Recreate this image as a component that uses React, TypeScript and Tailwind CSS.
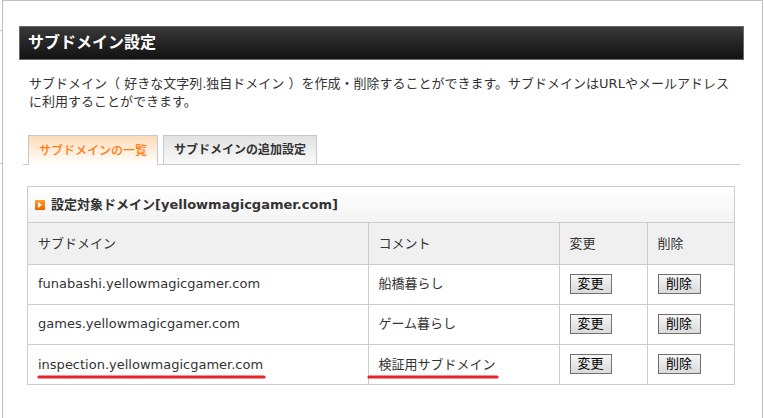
import React from "react";

const font = '"DejaVu Sans", "Noto Sans CJK JP", sans-serif';

function Btn({ label, w }: { label: string; w: string }) {
  return (
    <button className={`${w} h-[20px] border border-[#707070] bg-gradient-to-b from-[#f6f6f6] to-[#dadada] text-[13px] leading-[18px] text-black`}>
      {label}
    </button>
  );
}

function Underlined({ children, w, left }: { children: React.ReactNode; w: number; left: string }) {
  return (
    <span className="relative inline-block">
      {children}
      <svg
        className={`absolute ${left} top-[19px]`}
        width={w}
        height={6}
        viewBox={`0 0 ${w} 6`}
      >
        <path d={`M2 3 L${w - 2} 3`} stroke="#e8202a" strokeWidth={3.2} strokeLinecap="round" />
      </svg>
    </span>
  );
}

export default function App() {
  const rows = [
    { d: "funabashi.yellowmagicgamer.com", c: "船橋暮らし" },
    { d: "games.yellowmagicgamer.com", c: "ゲーム暮らし" },
    { d: "inspection.yellowmagicgamer.com", c: "検証用サブドメイン", mark: true },
  ];
  return (
    <div className="w-[764px] h-[418px] bg-white flex overflow-hidden text-[#333]" style={{ fontFamily: font }}>
      <div className="w-[2px] shrink-0 flex flex-col">
        <div className="h-[31px] border-b border-[#c8c8c8]" />
        <div className="h-[133px] border-b border-[#c8c8c8]" />
      </div>
      <div className="w-[761px] shrink-0 border-l border-t border-r border-[#c0c0c0] h-[430px] pl-[16px] pr-[18px] pt-[25px]">
        <div className="h-[34px] border border-[#6a6a6a] bg-gradient-to-b from-[#3a3a3a] to-[#121212] flex items-center pl-[8px]">
          <span className="text-white font-bold text-[16px] leading-none">サブドメイン設定</span>
        </div>
        <p className="mt-[15px] pl-[10px] text-[13px] leading-[18px] whitespace-nowrap">
          サブドメイン（ 好きな文字列.独自ドメイン ）を作成・削除することができます。サブドメインはURLやメールアドレス
          <br />
          に利用することができます。
        </p>
        <div className="mt-[24px] ml-[4px] w-[717px] border-b border-[#c8c8c8] flex items-end pl-[5px] gap-[5px] h-[30px]">
          <div className="w-[130px] h-[30px] -mb-px border border-b-0 border-[#c8c8c8] bg-gradient-to-b from-[#fddcb8] to-white flex items-center justify-center">
            <span className="text-[12px] font-medium text-[#ff7a10]">サブドメインの一覧</span>
          </div>
          <div className="w-[154px] h-[29px] border border-b-0 border-[#c8c8c8] bg-gradient-to-b from-[#e2e2e2] to-[#fafafa] flex items-center justify-center">
            <span className="text-[12px] font-bold text-[#333]">サブドメインの追加設定</span>
          </div>
        </div>
        <div className="mt-[21px] ml-[8px] w-[708px] border border-[#cccccc]">
          <div className="h-[36px] bg-gradient-to-b from-white to-[#f3f3f3] border-b border-[#cccccc] flex items-center pl-[7px] gap-[6px]">
            <span className="w-[10px] h-[10px] bg-gradient-to-b from-[#ffa030] to-[#e86400] flex items-center justify-center">
              <svg width="4" height="6" viewBox="0 0 4 6"><path d="M0 0 L4 3 L0 6 Z" fill="#fff3e0" /></svg>
            </span>
            <span className="text-[13px] font-bold text-[#333]">設定対象ドメイン[yellowmagicgamer.com]</span>
          </div>
          <table className="border-collapse text-[13px] w-[706px] table-fixed">
            <colgroup>
              <col className="w-[340px]" />
              <col className="w-[191px]" />
              <col className="w-[88px]" />
              <col className="w-[87px]" />
            </colgroup>
            <thead>
              <tr className="h-[41px] bg-[#f0f0f0]">
                <th className="text-left font-normal pl-[10px] border-r border-[#cccccc]">サブドメイン</th>
                <th className="text-left font-normal pl-[10px] border-r border-[#cccccc]">コメント</th>
                <th className="text-left font-normal pl-[10px] border-r border-[#cccccc]">変更</th>
                <th className="text-left font-normal pl-[10px]">削除</th>
              </tr>
            </thead>
            <tbody>
              {rows.map((r, i) => (
                <tr key={i} className="h-[40px] border-t border-[#cccccc]">
                  <td className="pl-[10px] border-r border-[#cccccc] whitespace-nowrap">
                    {r.mark ? <Underlined w={229} left="left-[-1px]">{r.d}</Underlined> : r.d}
                  </td>
                  <td className="pl-[10px] border-r border-[#cccccc] whitespace-nowrap">
                    {r.mark ? <Underlined w={132} left="left-[-12px]">{r.c}</Underlined> : r.c}
                  </td>
                  <td className="pl-[10px] border-r border-[#cccccc]">
                    <Btn label="変更" w="w-[42px]" />
                  </td>
                  <td className="pl-[10px]">
                    <Btn label="削除" w="w-[43px]" />
                  </td>
                </tr>
              ))}
            </tbody>
          </table>
        </div>
      </div>
    </div>
  );
}
